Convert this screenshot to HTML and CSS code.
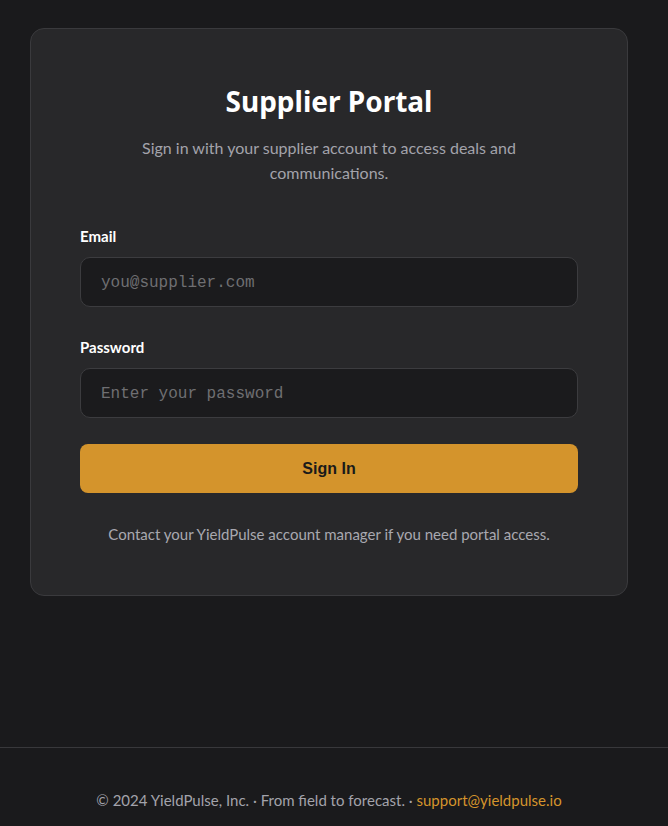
FILE: index.html
```html
<!DOCTYPE html>
<html lang="en">
<head>
<meta charset="utf-8">
<title>Supplier Portal</title>
<link rel="stylesheet" href="styles.css">
</head>
<body>
<div class="page">
  <main class="main">
    <section class="card">
      <h1 class="title">Supplier Portal</h1>
      <p class="subtitle">Sign in with your supplier account to access deals and communications.</p>
      <form class="form">
        <div class="field">
          <label class="label" for="email">Email</label>
          <input class="input" id="email" type="email" placeholder="you@supplier.com">
        </div>
        <div class="field">
          <label class="label" for="password">Password</label>
          <input class="input" id="password" type="password" placeholder="Enter your password">
        </div>
        <button class="btn" type="button">Sign In</button>
      </form>
      <p class="note">Contact your YieldPulse account manager if you need portal access.</p>
    </section>
  </main>
  <footer class="footer">
    © 2024 YieldPulse, Inc. · From field to forecast. · <a class="link" href="#">support@yieldpulse.io</a>
  </footer>
</div>
</body>
</html>
```

FILE: styles.css
```css
* { box-sizing: border-box; }
html, body { margin: 0; padding: 0; }
body {
  background: #1a1a1c;
  color: #e8e8ea;
  font-family: Lato, "Noto Sans", sans-serif;
}
.page {
  min-height: 100vh;
  display: flex;
  flex-direction: column;
}
.main {
  flex: 1;
  padding: 28px 40px 40px 30px;
}
.card {
  background: #28282a;
  border: 1px solid #3a3a3d;
  border-radius: 14px;
  padding: 52px 49px 51px;
}
.title {
  margin: 0;
  text-align: center;
  font-family: "Noto Sans", sans-serif;
  font-size: 28px;
  font-weight: 700;
  color: #ffffff;
  line-height: 40px;
}
.subtitle {
  margin: 14px auto 0;
  max-width: 420px;
  text-align: center;
  font-size: 16px;
  line-height: 25px;
  color: #a3a3ab;
}
.form {
  margin-top: 41px;
  display: flex;
  flex-direction: column;
}
.field {
  display: flex;
  flex-direction: column;
  margin-bottom: 26px;
}
.field + .field { margin-top: 4px; }
.label {
  font-size: 15px;
  font-weight: 700;
  color: #ffffff;
  line-height: 20px;
  margin-bottom: 11px;
}
.input {
  height: 50px;
  background: #1b1b1d;
  border: 1px solid #3c3c3f;
  border-radius: 10px;
  padding: 1px 20px 0;
  font-family: "Liberation Mono", monospace;
  font-size: 16px;
  color: #e8e8ea;
  outline: none;
}
.input::placeholder { color: #6f6f72; }
.btn {
  height: 49px;
  border: none;
  border-radius: 8px;
  background: #d4942c;
  color: #1a1a1a;
  font-family: "Liberation Sans", Arial, sans-serif;
  font-weight: 700;
  font-size: 16px;
  cursor: pointer;
}
.note {
  margin: 31px 0 0;
  text-align: center;
  font-size: 15px;
  line-height: 20px;
  color: #a8a8b0;
}
.footer {
  border-top: 1px solid #38383b;
  padding: 40px 20px 14px 10px;
  text-align: center;
  font-size: 15px;
  line-height: 24px;
  color: #a3a3ab;
}
.link {
  color: #d4942c;
  text-decoration: none;
}
```
